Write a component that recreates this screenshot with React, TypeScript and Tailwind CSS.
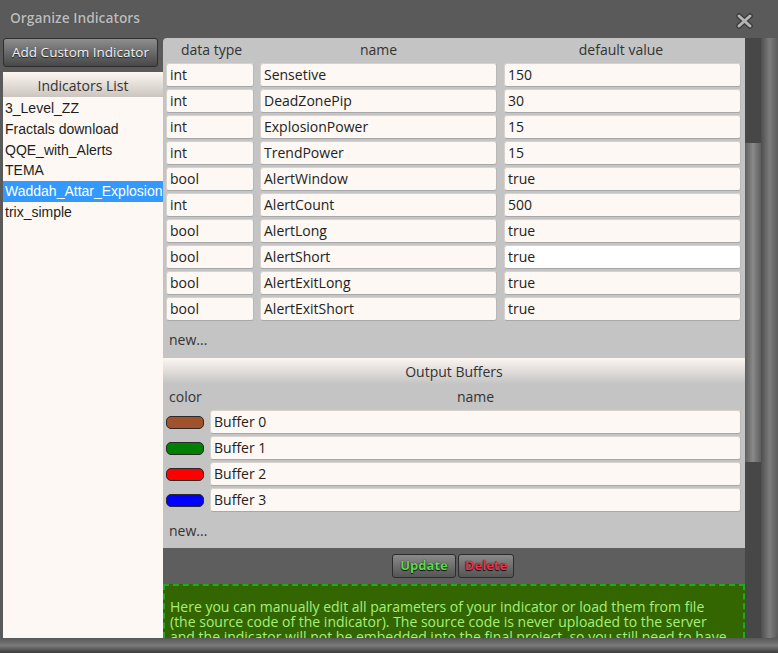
import React from "react";

const params: [string, string, string][] = [
  ["int", "Sensetive", "150"],
  ["int", "DeadZonePip", "30"],
  ["int", "ExplosionPower", "15"],
  ["int", "TrendPower", "15"],
  ["bool", "AlertWindow", "true"],
  ["int", "AlertCount", "500"],
  ["bool", "AlertLong", "true"],
  ["bool", "AlertShort", "true"],
  ["bool", "AlertExitLong", "true"],
  ["bool", "AlertExitShort", "true"],
];

const buffers: [string, string][] = [
  ["#a0522d", "Buffer 0"],
  ["#008000", "Buffer 1"],
  ["#ff0000", "Buffer 2"],
  ["#0000ff", "Buffer 3"],
];

const indicators = [
  "3_Level_ZZ",
  "Fractals download",
  "QQE_with_Alerts",
  "TEMA",
  "Waddah_Attar_Explosion",
  "trix_simple",
];

function Field({ w, children, white }: { w: string; children: React.ReactNode; white?: boolean }) {
  return (
    <div
      className={`${w} h-[24px] rounded-[3px] border border-[#d8d2cc] border-b-[#a8a8a8] border-r-[#b8b8b8] ${
        white ? "bg-white" : "bg-[#fdf8f3]"
      } flex items-center pl-[3px] text-[14px] text-[#222] leading-none overflow-hidden whitespace-nowrap`}
    >
      {children}
    </div>
  );
}

export default function App() {
  return (
    <div
      className="w-[778px] h-[653px] bg-[#5a5a5a] overflow-hidden flex flex-col"
      style={{ fontFamily: '"Open Sans", "Noto Sans", sans-serif' }}
    >
      {/* Title bar */}
      <div className="h-[38px] flex items-center justify-between pl-[10px] pr-[25px] shrink-0">
        <span className="text-[13.8px] font-semibold text-[#bdbdbd] -mt-[1px] [text-shadow:0_0_1px_#444]">Organize Indicators</span>
        <svg width="17" height="16" viewBox="0 0 17 16" className="mt-[3px]">
          <path d="M3 3 L14 13 M14 3 L3 13" stroke="#3a3a3a" strokeWidth="5.5" strokeLinecap="round" />
          <path d="M3 3 L14 13 M14 3 L3 13" stroke="#b4b4b4" strokeWidth="3" strokeLinecap="round" />
        </svg>
      </div>

      {/* Body */}
      <div className="flex flex-1 min-h-0">
        <div className="w-[3px] shrink-0" />
        {/* Left column */}
        <div className="w-[160px] shrink-0 flex flex-col">
          <div className="h-[29px] w-[155px] rounded-[3px] border border-[#2e2e2e] bg-gradient-to-b from-[#8e8e8e] to-[#484848] flex items-center justify-center text-[13.5px] text-[#f2f2f2] [text-shadow:0_1px_1px_#222]">
            Add Custom Indicator
          </div>
          <div className="h-[5px]" />
          <div className="h-[25px] bg-gradient-to-b from-[#fdf6f1] to-[#cbc5c0] flex items-center justify-center text-[14px] text-[#333] pt-[2px]">
            Indicators List
          </div>
          <div className="flex-1 bg-[#fdf8f4] pt-[1px]" style={{ fontFamily: '"Liberation Sans", Arial, sans-serif' }}>
            {indicators.map((n, i) => (
              <div
                key={n}
                className={`h-[20.8px] flex items-center pl-[2px] text-[14px] whitespace-nowrap overflow-hidden ${
                  i === 4 ? "bg-[#3399ff] text-white" : "text-[#1e1e1e]"
                }`}
              >
                {n}
              </div>
            ))}
          </div>
        </div>

        {/* Right panel */}
        <div className="w-[582px] shrink-0 flex flex-col rounded-tl-[4px] overflow-hidden">
          <div className="bg-[#c4c4c4] flex flex-col">
            <div className="h-[24px] flex items-center text-[14px] text-[#333] -mt-[1px]">
              <div className="w-[94px] pl-[3px] text-center">data type</div>
              <div className="w-[243px] text-center">name</div>
              <div className="w-[242px] text-center">default value</div>
            </div>
            <div className="flex flex-col gap-[2px] pl-[3px] pt-[2px]">
              {params.map(([t, n, v], i) => (
                <div key={n} className="flex">
                  <Field w="w-[88px]">{t}</Field>
                  <div className="w-[6px]" />
                  <Field w="w-[237px]">{n}</Field>
                  <div className="w-[7px]" />
                  <Field w="w-[237px]" white={i === 7}>{v}</Field>
                </div>
              ))}
            </div>
            <div className="h-[37px] flex items-center pl-[6px] text-[14px] text-[#333]">new...</div>
            <div className="h-[26px] bg-gradient-to-b from-[#fdf6f1] to-[#c4c4c4] flex items-center justify-center text-[14px] text-[#333]">
              Output Buffers
            </div>
            <div className="h-[26px] flex items-center text-[14px] text-[#333] -mt-[1px]">
              <div className="w-[47px] pl-[6px]">color</div>
              <div className="w-[531px] text-center">name</div>
            </div>
            <div className="flex flex-col gap-[2px] pl-[3px] pt-[1px]">
              {buffers.map(([c, n]) => (
                <div key={n} className="flex items-center">
                  <div className="w-[38px] h-[13px] rounded-[5px] border border-[#2a2a2a]" style={{ backgroundColor: c }} />
                  <div className="w-[6px]" />
                  <Field w="w-[531px]">{n}</Field>
                </div>
              ))}
            </div>
            <div className="h-[36px] flex items-center pl-[6px] text-[14px] text-[#333]">new...</div>
          </div>
          <div className="h-[36px] bg-[#5e5e5e] flex items-center justify-center gap-[2px] pr-[2px]">
            <div className="h-[24px] w-[64px] rounded-[3px] border border-[#2c2c2c] bg-gradient-to-b from-[#8a8a8a] to-[#555] flex items-center justify-center text-[13px] font-bold text-[#5ed850] [text-shadow:0_0_1px_#111,0_1px_1px_#111]">
              Update
            </div>
            <div className="h-[24px] w-[56px] rounded-[3px] border border-[#2c2c2c] bg-gradient-to-b from-[#8a8a8a] to-[#555] flex items-center justify-center text-[13px] font-bold text-[#e2344a] [text-shadow:0_0_1px_#111,0_1px_1px_#111]">
              Delete
            </div>
          </div>
          <div className="flex-1 bg-[#336600] border-2 border-dashed border-[#1faa1f] border-b-0 pl-[5px] pr-[16px] pt-[13px] text-[14px] leading-[15px] text-[#a6f07c] overflow-hidden">
            Here you can manually edit all parameters of your indicator or load them from file (the source code of the indicator). The source code is never uploaded to the server and the indicator will not be embedded into the final project, so you still need to have the indicator installed in your terminal.
          </div>
        </div>

        {/* Scrollbar */}
        <div className="w-[16px] shrink-0 bg-[#474747] flex flex-col">
          <div className="h-[105px]" />
          <div className="h-[319px] bg-gradient-to-r from-[#5e5e5e] via-[#8a8a8a] to-[#5e5e5e]" />
        </div>
        {/* Right border */}
        <div className="w-[17px] shrink-0 bg-gradient-to-r from-[#4e4e4e] via-[#7c7c7c] to-[#5a5a5a] rounded-br-[6px]" />
      </div>
      {/* Bottom border */}
      <div className="h-[15px] shrink-0 bg-gradient-to-b from-[#575757] via-[#7a7a7a] to-[#3c3c3c]" />
    </div>
  );
}
